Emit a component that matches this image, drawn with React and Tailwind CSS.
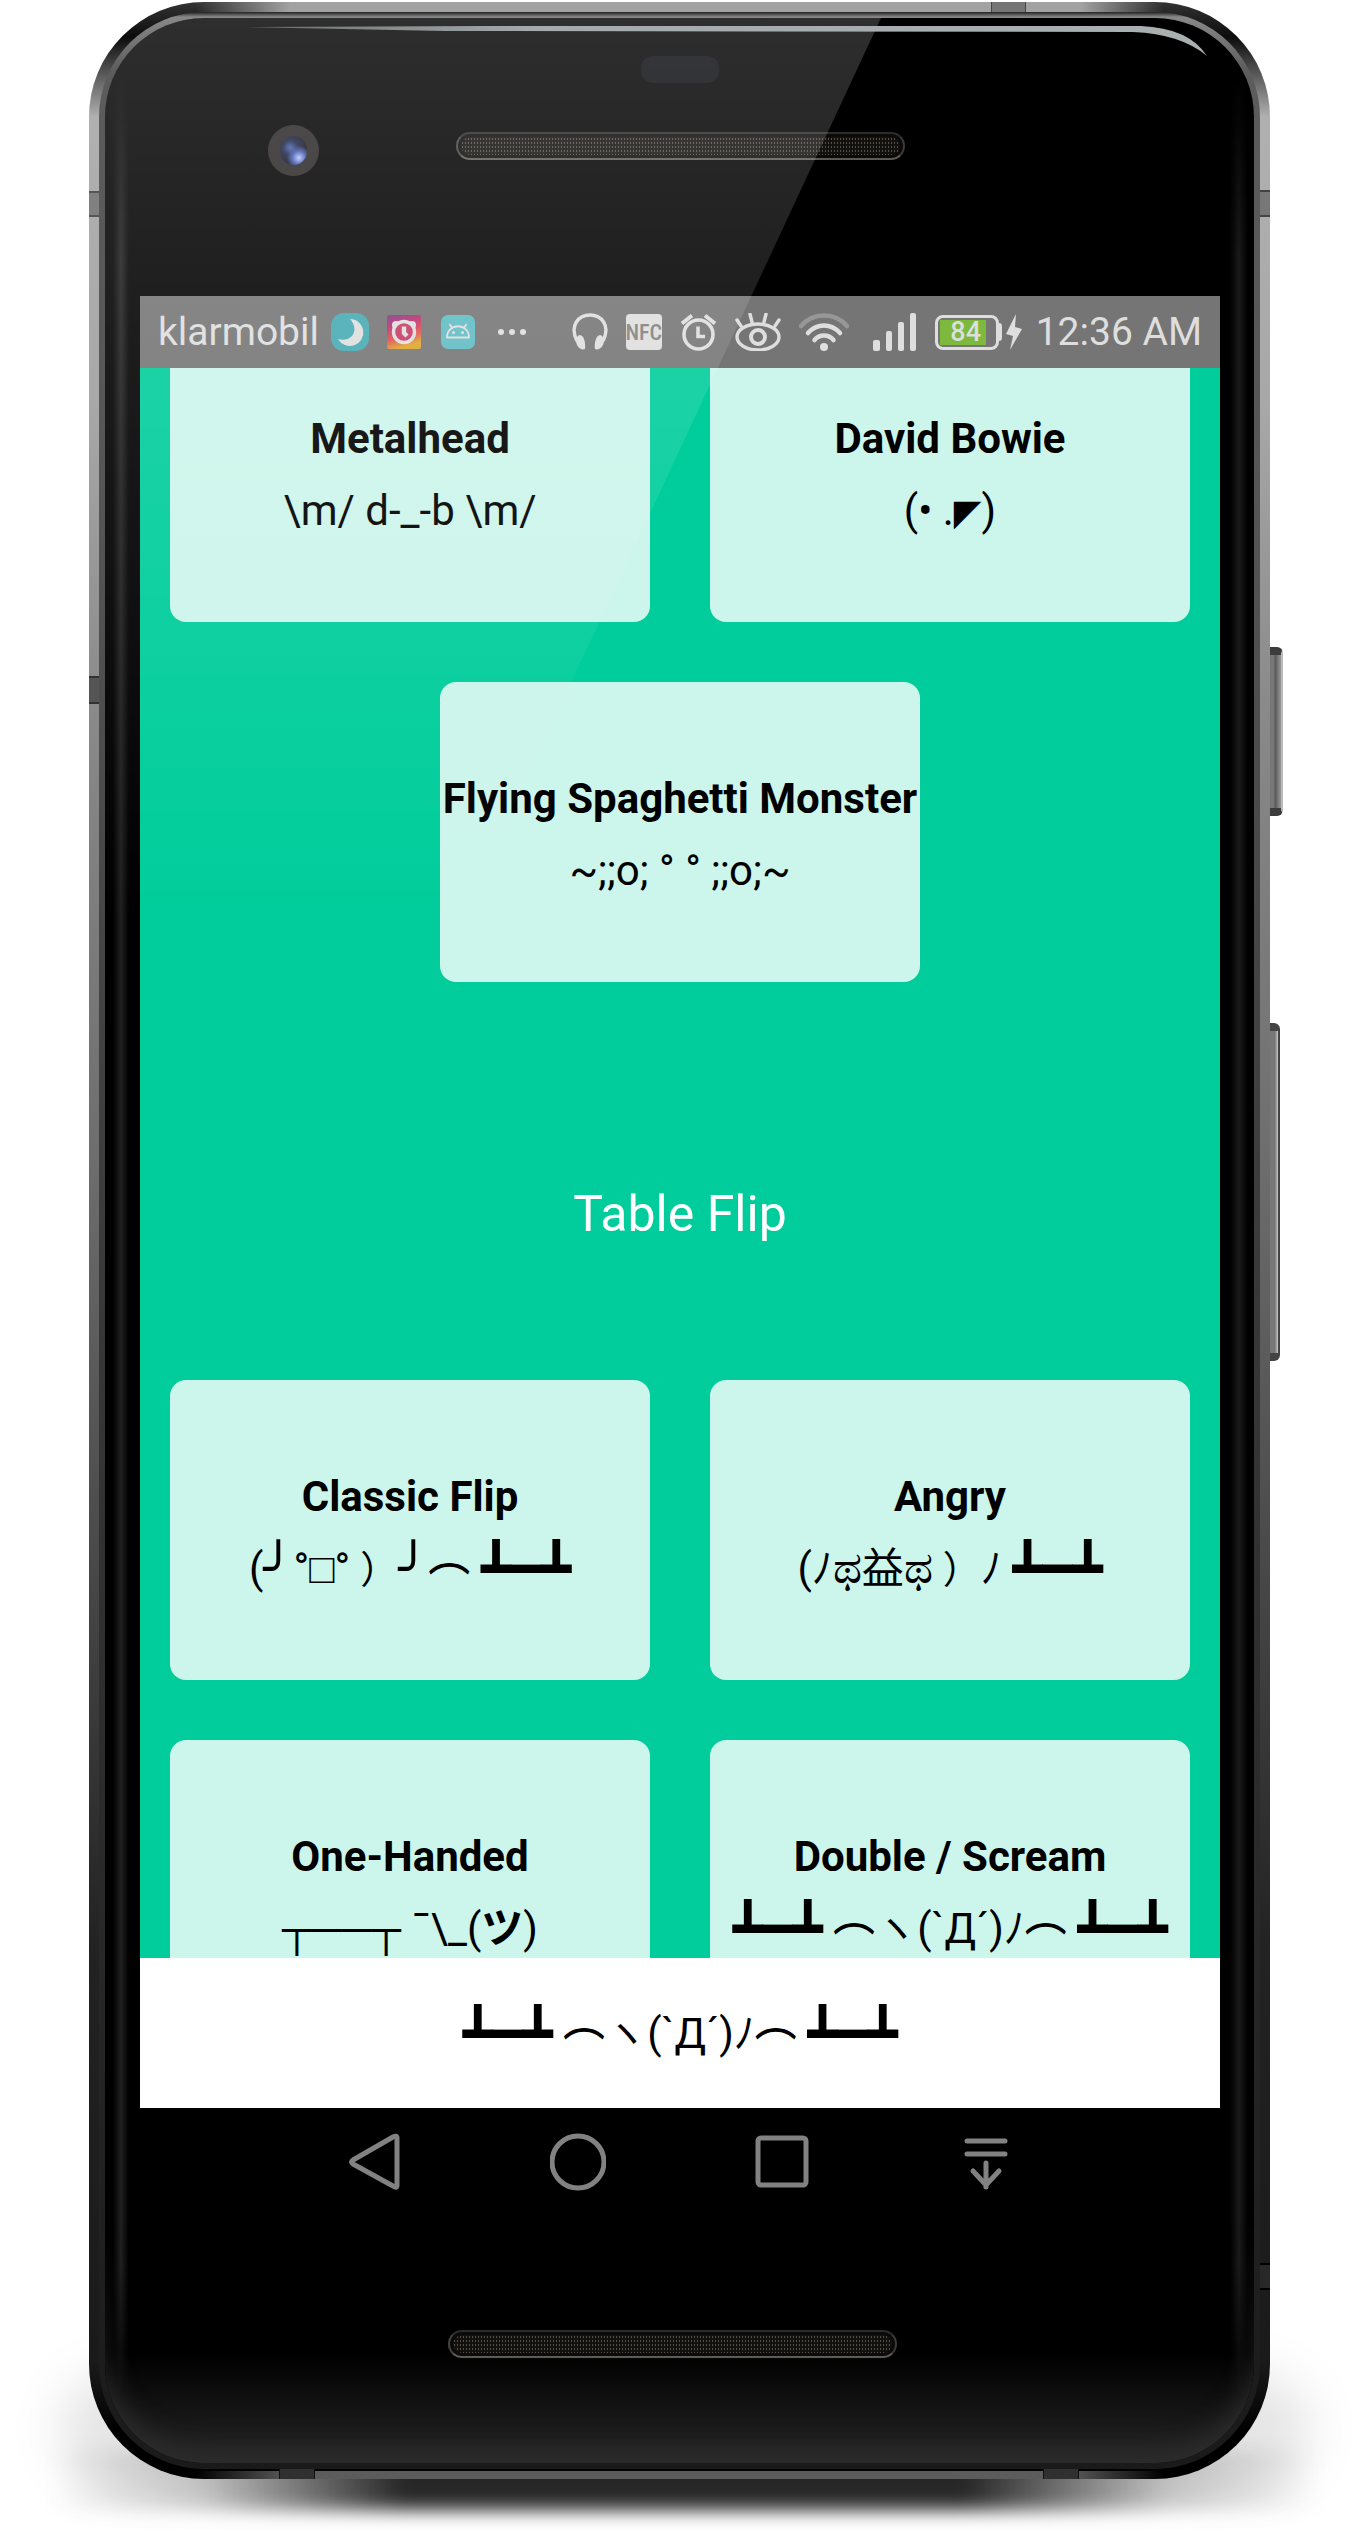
import React from "react";

const BOX = "font-['DejaVu_Sans'] text-[50px] leading-none align-[-3px]";
const LIGHT_BOX = "font-['Liberation_Sans'] text-[42px] leading-none";

const Table = () => <span className={BOX}>┻━┻</span>;
const Arc = () => <span className="align-[12px] leading-none font-medium">︵</span>;
const WideParen = () => <span className="pl-2.5 text-[38px] leading-none">）</span>;
const Eye = () => <span className="text-[45px] leading-none font-medium">ಥ</span>;

const DoubleScream = () => (
  <>
    <Table /> <Arc />ヽ(`Д´)ﾉ<Arc /> <Table />
  </>
);

function Card({ title, children, single = false }) {
  return (
    <button
      type="button"
      className={
        "flex h-[300px] flex-col items-center justify-center rounded-2xl bg-[#ccf5eb] pt-1.5 text-[42px] leading-[72px] whitespace-nowrap text-black " +
        (single ? "col-span-2 mx-auto w-[calc(50%-30px)]" : "")
      }
    >
      <span className="block h-[72px] font-bold">{title}</span>
      <span className="block h-[72px]">{children}</span>
    </button>
  );
}

function StatusBar() {
  return (
    <header className="flex h-[72px] items-center justify-between bg-[#757575] pr-[18px] pl-[18px] text-[39px] whitespace-nowrap text-[#dedede]">
      <div className="flex items-center">
        <span>klarmobil</span>
        <svg className="ml-3" width="38" height="38" viewBox="0 0 38 38" aria-hidden="true">
          <rect width="38" height="38" rx="13" fill="#46aab2" />
          <path d="M19 6a13.500 13.500 0 1 1-12 20c14 4 22-9 12-20z" fill="#dedede" />
        </svg>
        <svg className="ml-[18px]" width="34" height="34" viewBox="0 0 34 34" aria-hidden="true">
          <defs>
            <linearGradient id="alarmFill" x1="0" y1="0" x2="0.3" y2="1">
              <stop offset="0" stopColor="#7d3f86" />
              <stop offset="0.35" stopColor="#bd2f6f" />
              <stop offset="0.7" stopColor="#dd5050" />
              <stop offset="1" stopColor="#dfa52b" />
            </linearGradient>
          </defs>
          <rect width="34" height="34" rx="2" fill="url(#alarmFill)" />
          <circle cx="9" cy="10" r="4" fill="#dedede" />
          <circle cx="25" cy="10" r="4" fill="#dedede" />
          <circle cx="17" cy="17" r="10.500" fill="#c93a64" stroke="#dedede" strokeWidth="3.400" />
          <path d="M17 11.500v6.500l3 3" fill="none" stroke="#dedede" strokeWidth="4.400" />
        </svg>
        <svg className="ml-5" width="34" height="34" viewBox="0 0 34 34" aria-hidden="true">
          <rect width="34" height="34" rx="7" fill="#5fbcc3" />
          <path d="M6 22.500c0-15 22-15 22 0zM11 13l-2.500-4M23 13l2.500-4" fill="none" stroke="#dedede" strokeWidth="1.800" strokeLinejoin="round" />
          <circle cx="12.500" cy="17.500" r="1.500" fill="#dedede" />
          <circle cx="21.500" cy="17.500" r="1.500" fill="#dedede" />
        </svg>
        <svg className="ml-[23px]" width="28" height="8" viewBox="0 0 28 8" fill="#dedede" aria-hidden="true">
          <circle cx="3" cy="4" r="3" />
          <circle cx="14" cy="4" r="3" />
          <circle cx="25" cy="4" r="3" />
        </svg>
      </div>

      <div className="flex items-center gap-[18px]">
        <svg width="36" height="38" viewBox="0 0 36 38" aria-hidden="true">
          <path d="M5 28C-3 12 7 2 18 2s21 10 13 26" fill="none" stroke="#dedede" strokeWidth="3.400" />
          <path d="M8 22c4 0 6 9 5 14-5 2-9-4-9-8 0-3 2-6 4-6zM28 22c-4 0-6 9-5 14 5 2 9-4 9-8 0-3-2-6-4-6z" fill="#dedede" />
        </svg>
        <span className="flex h-9 w-9 items-center justify-center rounded-sm bg-[#dedede] font-['Roboto_Condensed','Roboto'] text-[22px] font-medium text-[#818181]">
          NFC
        </span>
        <svg width="37" height="38" viewBox="0 0 37 38" fill="none" stroke="#dedede" aria-hidden="true">
          <circle cx="18.500" cy="21.500" r="14.500" strokeWidth="3.600" />
          <path d="M18 13.500v10h7" strokeWidth="3.600" />
          <path d="M2 10.500l10-8M35 10.500l-10-8" strokeWidth="4" />
        </svg>
        <svg width="46" height="38" viewBox="0 0 46 38" fill="none" stroke="#dedede" aria-hidden="true">
          <ellipse cx="23" cy="24" rx="21" ry="13" strokeWidth="3.400" />
          <circle cx="23" cy="24" r="7" strokeWidth="4" />
          <path d="M2 7l4 6M15 1l2 8M31 1l-2 8M44 7l-4 6" strokeWidth="3.400" strokeLinecap="round" />
        </svg>
        <svg width="50" height="38" viewBox="0 0 50 38" fill="none" strokeWidth="4.500" strokeLinecap="round" aria-hidden="true">
          <path d="M2 13c12-14 34-14 46 0" stroke="#979797" />
          <path d="M9 20c9-10 23-10 32 0M15.500 27c5-6 14-6 19 0" stroke="#dedede" />
          <circle cx="25" cy="34" r="4" fill="#dedede" />
        </svg>
        <svg className="ml-1.5" width="44" height="38" viewBox="0 0 44 38" fill="#dedede" aria-hidden="true">
          <rect y="27" width="7" height="11" rx="2" />
          <rect x="13" y="18" width="6" height="20" rx="2" />
          <rect x="25" y="9" width="6" height="29" rx="2" />
          <rect x="37" width="6" height="38" rx="2" />
        </svg>
        <div className="flex items-center">
          <div className="h-[35px] w-16 rounded-lg border-[3px] border-[#dedede] p-[2px]">
            <div className="flex h-full w-[46px] items-center justify-center bg-[#7cb93c] pl-1.5 text-[27px] font-medium">84</div>
          </div>
          <div className="h-[18px] w-[3px] rounded-r-sm bg-[#dedede]" />
          <svg className="ml-1" width="16" height="36" viewBox="0 0 16 36" fill="#dedede" aria-hidden="true">
            <path d="M10 0L0 20l7 2-3 14 12-21-7-2z" />
          </svg>
        </div>
        <time className="-ml-1">12:36 AM</time>
      </div>
    </header>
  );
}

function NavBar() {
  const icons = [
    ["Back", <path d="M51 5v47q0 4-4 1L7 31q-3-2 0-4L47 4q4-2 4 1z" />],
    ["Home", <circle cx="28" cy="29" r="26" />],
    ["Overview", <rect x="4" y="5" width="48" height="47" rx="3" />],
    ["Hide bar", <path d="M9 8h38M9 21h38M28 30v24M15 38l13 14 13-14" strokeLinecap="round" />],
  ];
  return (
    <nav className="flex h-[108px] items-center justify-center bg-black">
      {icons.map(([label, shape]) => (
        <button key={label} type="button" aria-label={label} className="flex h-full w-[204px] items-center justify-center">
          <svg width="56" height="58" viewBox="0 0 56 58" fill="none" stroke="#828282" strokeWidth="5" strokeLinejoin="round" aria-hidden="true">
            {shape}
          </svg>
        </button>
      ))}
    </nav>
  );
}

function Speaker() {
  return (
    <div className="h-7 w-[449px] rounded-full border-2 border-t-[#2c2c2c] border-r-[#3a3a3a] border-b-[#5e5b57] border-l-[#444] bg-[#0b0a09] p-[3px]">
      <div className="h-full rounded-full bg-[#12110e] bg-[radial-gradient(#565146_1px,transparent_1px)] bg-[size:3px_4px]" />
    </div>
  );
}

export default function App() {
  return (
    <main className="relative isolate overflow-hidden bg-white pt-[2px] pr-[100px] pb-[55px] pl-[89px] font-['Roboto','Noto_Sans_CJK_JP',sans-serif]">
      <div className="absolute right-[50px] bottom-[24px] left-[50px] -z-10 h-[60px] bg-[linear-gradient(to_right,transparent,rgba(0,0,0,0.2)_12%,rgba(0,0,0,0.84)_28%,rgba(0,0,0,0.84)_72%,rgba(0,0,0,0.2)_88%,transparent)] blur-[9px]" />
      <div className="absolute right-[60px] bottom-[50px] left-[60px] -z-10 h-[110px] rounded-[80px] bg-black/10 blur-[24px]" />

      <div className="relative rounded-[115px] bg-[linear-gradient(to_right,transparent_9%,#a2a2a2_17%,#a2a2a2_84%,transparent_91%),linear-gradient(to_right,transparent_9%,#5c5c5c_17%,#5c5c5c_83%,transparent_91%),linear-gradient(to_bottom,#333,#0c0c0c_35px,#b0b0b0_115px,#a8a8a8_400px,#8a8a8a_700px,#6e6e6e_1150px,#454545_1600px,#222_1950px,#1a1a1a_2360px,#000_2430px)] bg-[size:100%_10px,100%_8px,100%_100%] bg-[position:top,bottom,center] bg-no-repeat p-[10px]">
        {/* antenna bands */}
        <div className="absolute top-[189px] left-0 h-[26px] w-4 border-y-2 border-[#555] bg-[#808080]" />
        <div className="absolute top-[188px] right-0 h-[27px] w-4 border-y-2 border-[#444] bg-[#777]" />
        <div className="absolute top-[674px] left-0 h-[28px] w-[18px] border-y-2 border-[#333] bg-[#555]" />
        <div className="absolute right-0 bottom-[189px] h-[27px] w-4 border-y-2 border-black bg-[#282828]" />
        <div className="absolute top-0 left-[902px] h-4 w-[35px] border-x border-[#444] bg-[#757575]" />
        <div className="absolute bottom-0 left-[190px] h-4 w-9 border-x border-[#111] bg-[#303030]" />
        <div className="absolute bottom-0 left-[954px] h-4 w-9 border-x border-[#111] bg-[#303030]" />
        {/* power and volume keys */}
        <div className="absolute top-[645px] -right-[13px] h-[169px] w-[13px] rounded-r-md border-y-8 border-r-2 border-[#3c3c3c] border-r-[#bbb] bg-[linear-gradient(to_right,#777_4px,#555_5px,#999)]" />
        <div className="absolute top-[1021px] -right-[10px] h-[338px] w-[10px] rounded-r-md border-y-8 border-r-2 border-[#444] border-r-[#444] bg-[linear-gradient(to_right,#777_5px,#ccc)]" />

        <div className="relative rounded-[105px] bg-[linear-gradient(to_bottom,#222,#888_5px,#5c5c5c_60px,#555_500px,#383838_1300px,#262626_2000px,#1a1a1a)] p-[6px]">
          <div className="relative overflow-hidden rounded-[99px] bg-black pr-[34px] pl-[35px]">
            {/* soft edge light along the glass */}
            <div className="absolute inset-y-[60px] left-[8px] w-[16px] bg-[linear-gradient(to_right,transparent,#202020,transparent)] [mask-image:linear-gradient(to_bottom,transparent,black_180px,black_94%,transparent)]" />
            <div className="absolute inset-y-[60px] right-[6px] w-[18px] bg-[linear-gradient(to_right,transparent,#1a1a1a,transparent)] [mask-image:linear-gradient(to_bottom,transparent,black_180px,black_94%,transparent)]" />
            <div className="absolute inset-x-0 bottom-0 h-[110px] bg-linear-to-b from-transparent to-[#262626]" />
            <div className="absolute inset-x-0 bottom-0 h-[240px] rounded-b-[99px] shadow-[inset_0_-12px_24px_#2c2c2c] [mask-image:linear-gradient(to_bottom,transparent,black_75%)]" />

            <div className="relative flex h-[278px] justify-center">
              <div className="absolute top-[107px] left-[128px] flex h-[51px] w-[51px] items-center justify-center rounded-full bg-[#2b2728]">
                <div className="h-[29px] w-[27px] rounded-full bg-[radial-gradient(circle_at_70%_75%,#b9c8ff_0,#4a5fb4_22%,transparent_42%),radial-gradient(circle_at_38%_40%,#4a62b0_0,#1e274a_30%,#101018_75%)]" />
              </div>
              <div className="absolute top-[38px] h-[27px] w-[78px] rounded-xl bg-[#0a0b10]" />
              <div className="mt-[114px]">
                <Speaker />
              </div>
            </div>

            <div className="relative flex flex-col">
              <StatusBar />
              <section className="h-[1590px] overflow-hidden bg-[#00cd9b] px-[30px]">
                <div className="-mt-[46px] grid grid-cols-2 gap-[60px]">
                  <Card title="Metalhead">{"\\m/ d-_-b \\m/"}</Card>
                  <Card title="David Bowie">
                    (• .<span className="font-['DejaVu_Sans'] text-[36px] leading-none">◤</span>)
                  </Card>
                  <Card title="Flying Spaghetti Monster" single>
                    ~;;o; ° ° ;;o;~
                  </Card>
                </div>
                <h2 className="mt-[202px] mb-[136px] text-center text-[50px] leading-[60px] text-white">Table Flip</h2>
                <div className="grid grid-cols-2 gap-[60px]">
                  <Card title="Classic Flip">
                    (<span className={BOX}>╯</span>°<span className={LIGHT_BOX}>□</span>°<WideParen />
                    <span className={BOX}>╯</span>
                    <Arc /> <Table />
                  </Card>
                  <Card title="Angry">
                    (ﾉ<Eye />益<Eye />
                    <WideParen />ﾉ <Table />
                  </Card>
                  <Card title="One-Handed">
                    <span className={LIGHT_BOX}>┬──┬</span> {"¯\\_("}
                    <span className="font-bold">ツ</span>)
                  </Card>
                  <Card title="Double / Scream">
                    <DoubleScream />
                  </Card>
                </div>
              </section>
              <footer className="flex h-[150px] items-center justify-center bg-white pt-0.5 text-[42px] leading-[72px] whitespace-nowrap text-black">
                <output className="block h-[72px]">
                  <DoubleScream />
                </output>
              </footer>
              <NavBar />
            </div>

            <div className="relative flex h-[247px] justify-center pt-[114px] pr-4">
              <Speaker />
            </div>

            {/* diagonal reflection */}
            <div className="pointer-events-none absolute top-0 left-0 h-[982px] w-[776px] bg-[linear-gradient(to_bottom,rgba(255,255,255,0.18),rgba(255,255,255,0.12)_28%,rgba(255,255,255,0.06)_62%,transparent_92%)] [clip-path:polygon(0_0,100%_0,318px_100%,0_100%)]" />
            {/* highlight under the top edge */}
            <svg className="pointer-events-none absolute top-[6px] left-[140px]" width="966" height="36" viewBox="0 0 966 36" aria-hidden="true">
              <defs>
                <linearGradient id="edge">
                  <stop offset="0" stopColor="#a5abab" stopOpacity="0.500" />
                  <stop offset="0.3" stopColor="#a5abab" />
                  <stop offset="1" stopColor="#a9b0b0" />
                </linearGradient>
              </defs>
              <path d="M0 3L240 2H896Q944 4 962 32Q936 10 888 8L200 7z" fill="url(#edge)" />
            </svg>
          </div>
        </div>
      </div>
    </main>
  );
}
